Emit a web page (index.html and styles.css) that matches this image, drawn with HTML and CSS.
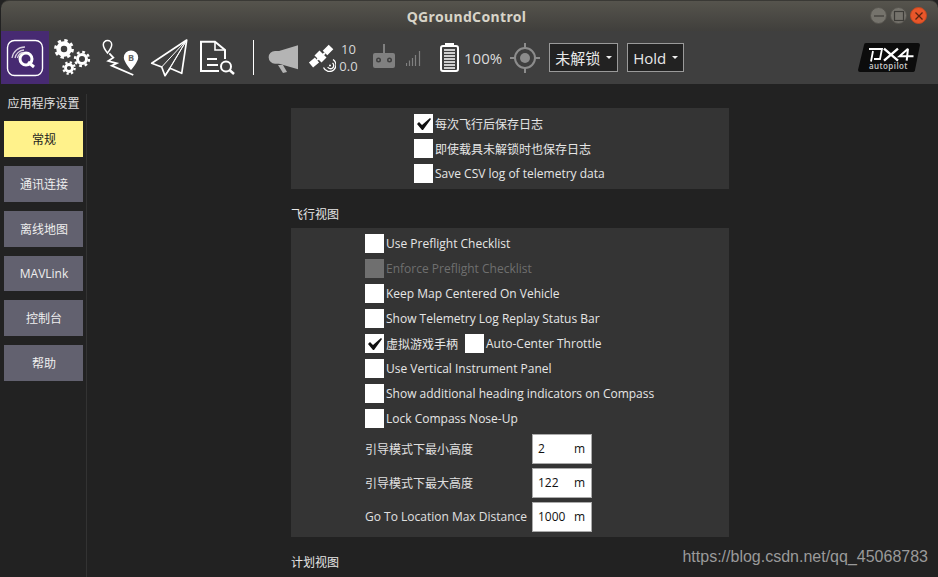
FILE: index.html
```html
<!DOCTYPE html>
<html lang="zh">
<head>
<meta charset="utf-8">
<title>QGroundControl</title>
<link rel="stylesheet" href="styles.css">
</head>
<body>
<div class="window">
  <header class="titlebar">
    <span class="title">QGroundControl</span>
    <div class="winbtns">
      <span class="wb"><svg width="14" height="14" viewBox="0 0 14 14"><path d="M2 7h10" stroke="#3c3b37" stroke-width="1.2"/></svg></span>
      <span class="wb"><svg width="14" height="14" viewBox="0 0 14 14"><rect x="2.5" y="2.5" width="9" height="9" fill="none" stroke="#3c3b37" stroke-width="1.2"/></svg></span>
      <span class="wb close"><svg width="14" height="14" viewBox="0 0 14 14"><path d="M3.5 3.5l7 7M10.5 3.5l-7 7" stroke="#5a2410" stroke-width="1.3"/></svg></span>
    </div>
  </header>
  <nav class="toolbar">
    <div class="logo">
      <svg width="38" height="38" viewBox="0 0 38 38">
        <rect x="1.5" y="1.5" width="35" height="35" rx="7" fill="none" stroke="#fff" stroke-width="1.4"/>
        <circle cx="20" cy="20" r="6" fill="none" stroke="#fff" stroke-width="3"/>
        <path d="M22 23l6 5" stroke="#fff" stroke-width="3"/>
        <path d="M6 19a13 13 0 0 1 13-11M9 19a10 10 0 0 1 9-8M11.500 19a7 7 0 0 1 6-5.500" fill="none" stroke="#d8d0e0" stroke-width="1.300"/>
      </svg>
    </div>
    <svg class="ic gears" width="38" height="38" viewBox="0 0 38 38">
      <g fill="none" stroke="#fff">
        <circle cx="10" cy="10" r="5.500" stroke-width="4.500"/><circle cx="10" cy="10" r="8.500" stroke-width="2.800" stroke-dasharray="3.340 3.340"/>
        <circle cx="28" cy="20" r="4.500" stroke-width="3"/><circle cx="28" cy="20" r="7" stroke-width="2.400" stroke-dasharray="2.750 2.750"/>
        <circle cx="15" cy="29" r="3.500" stroke-width="2.800"/><circle cx="15" cy="29" r="5.700" stroke-width="2.200" stroke-dasharray="2.240 2.240"/>
      </g>
    </svg>
    <svg class="ic route" width="38" height="38" viewBox="0 0 38 38">
      <path d="M5.500 1.500a4.200 4.200 0 0 1 4.200 4.200c0 3-4.200 8.300-4.200 8.300S1.300 8.700 1.300 5.700A4.200 4.200 0 0 1 5.500 1.500z" fill="none" stroke="#fff" stroke-width="1.500"/>
      <path d="M7.300 14.300l4 4.400-5 3.300 8.400 2.300-5 2.400L31.300 36" fill="none" stroke="#fff" stroke-width="1.800"/>
      <path d="M29 11.500a7.200 7.200 0 0 1 7.200 7.200c0 4-7.200 12.300-7.200 12.300s-7.200-8.300-7.200-12.300a7.200 7.200 0 0 1 7.200-7.200z" fill="#fff"/>
      <text x="29" y="21.500" class="pinletter">B</text>
    </svg>
    <svg class="ic plane" width="38" height="38" viewBox="0 0 38 38">
      <path d="M36.700 1L1.700 24.300l10 3.700L15 36.700l5-7.400 11.700 5z" fill="none" stroke="#fff" stroke-width="1.700" stroke-linejoin="round"/>
      <path d="M36.700 1L11.700 28M36.700 1L15 36.700M36.700 1L20 29.300" fill="none" stroke="#fff" stroke-width="1"/>
    </svg>
    <svg class="ic doc" width="38" height="38" viewBox="0 0 38 38">
      <path d="M26 20V11L16 2.700H2V32h18" fill="none" stroke="#fff" stroke-width="2"/>
      <path d="M16 3v8h10" fill="none" stroke="#fff" stroke-width="1.600"/>
      <path d="M8 20h10M8 26h11" stroke="#fff" stroke-width="2"/>
      <circle cx="27" cy="27.500" r="5" fill="none" stroke="#fff" stroke-width="2"/>
      <path d="M30.500 31l4.500 4" stroke="#fff" stroke-width="2.400"/>
    </svg>
    <span class="divider"></span>
    <svg class="ic horn" width="30" height="30" viewBox="0 0 30 30">
      <path d="M7 8h4L30 2.300v24L11 20.700H7A6.350 6.350 0 0 1 7 8z" fill="#b4b4b4"/>
      <path d="M10 22h5l4 7-4 1z" fill="#b4b4b4"/>
    </svg>
    <svg class="ic sat" width="28" height="28" viewBox="0 0 28 28">
      <g fill="none" stroke="#fff">
        <path d="M3 21l6-5M17 9l6-6" stroke-width="6.500"/>
        <path d="M9 16l8-7" stroke-width="2"/>
        <path d="M9 9l7 7" stroke-width="7"/>
        <path d="M25 15.500a6.500 6.500 0 1 1-9.500 8" stroke-width="1.300"/>
        <path d="M24.500 19a3.200 3.200 0 1 1-4.800 4" stroke-width="1.300"/>
      </g>
      <circle cx="22" cy="21.500" r="1" fill="#fff"/>
    </svg>
    <div class="satnum"><span>10</span><span>0.0</span></div>
    <svg class="ic rc" width="22" height="24" viewBox="0 0 22 24">
      <path d="M10 0h2v9h-2z" fill="#808080"/>
      <rect x="0" y="9" width="22" height="15" rx="2" fill="#808080"/>
      <circle cx="5.500" cy="16" r="2.500" fill="#3f3f3f"/><circle cx="16.500" cy="16" r="2.500" fill="#3f3f3f"/>
      <circle cx="5.500" cy="16" r="1" fill="#808080"/><circle cx="16.500" cy="16" r="1" fill="#808080"/>
    </svg>
    <svg class="ic bars" width="15" height="15" viewBox="0 0 15 15">
      <path d="M.5 15v-3M3.500 15V9.500M6.500 15V7M9.500 15V4M13.500 15V0" stroke="#808080" stroke-width="1.200"/>
    </svg>
    <svg class="ic batt" width="19" height="29" viewBox="0 0 19 29">
      <path d="M5 0h9v2H5z" fill="#fff"/>
      <rect x="1" y="3" width="17" height="25" rx="2" fill="none" stroke="#fff" stroke-width="2"/>
      <path d="M4 7h11M4 10h11M4 13h11M4 16h11M4 19h11M4 22h11M4 25h11" stroke="#fff" stroke-width="1.500"/>
    </svg>
    <span class="pct">100%</span>
    <svg class="ic gps" width="30" height="30" viewBox="0 0 30 30">
      <circle cx="15" cy="15" r="10" fill="none" stroke="#8c8c8c" stroke-width="2"/>
      <circle cx="15" cy="15" r="5" fill="#8c8c8c"/>
      <path d="M15 0v5M15 25v5M0 15h5M25 15h5" stroke="#8c8c8c" stroke-width="2"/>
    </svg>
    <div class="combo arm"><span>未解锁</span><i class="caret"></i></div>
    <div class="combo mode"><span>Hold</span><i class="caret"></i></div>
    <svg class="px4" width="62" height="29" viewBox="0 0 62 29">
      <path d="M8 0h52q2 0 2 2l-5 25q0 2-3 2H2q-2 0-2-2L6 2q0-2 2-2z" fill="#0c0c0c"/>
      <path d="M13 18.500L15 8M11 6h13l-2 10h-6" fill="none" stroke="#fff" stroke-width="1.800"/>
      <path d="M26 5.700L40 17.700M40 5.700L26 17.700" stroke="#fff" stroke-width="2.400"/>
      <path d="M50 5.700l-8.500 7.600h14M50 5.700L48.700 17.700" fill="none" stroke="#fff" stroke-width="2"/>
      <text x="11" y="26" class="px4sub">autopilot</text>
    </svg>
  </nav>
  <div class="main">
    <aside class="sidebar">
      <div class="sidehead">应用程序设置</div>
      <div class="sidebtn active">常规</div>
      <div class="sidebtn">通讯连接</div>
      <div class="sidebtn">离线地图</div>
      <div class="sidebtn short">MAVLink</div>
      <div class="sidebtn">控制台</div>
      <div class="sidebtn">帮助</div>
    </aside>
    <section class="content">
      <div class="column">
        <div class="panel logs">
          <label class="row"><span class="cb on"><svg width="19" height="19" viewBox="0 0 19 19"><path d="M3 10l2-2 3 3 8-7 1 1-8 11H8z" fill="#111"/></svg></span><span>每次飞行后保存日志</span></label>
          <label class="row"><span class="cb"></span><span>即使载具未解锁时也保存日志</span></label>
          <label class="row"><span class="cb"></span><span>Save CSV log of telemetry data</span></label>
        </div>
        <h2 class="head">飞行视图</h2>
        <div class="panel fly">
          <label class="row"><span class="cb"></span><span>Use Preflight Checklist</span></label>
          <label class="row dim"><span class="cb off"></span><span>Enforce Preflight Checklist</span></label>
          <label class="row"><span class="cb"></span><span>Keep Map Centered On Vehicle</span></label>
          <label class="row"><span class="cb"></span><span>Show Telemetry Log Replay Status Bar</span></label>
          <label class="row"><span class="cb on"><svg width="19" height="19" viewBox="0 0 19 19"><path d="M3 10l2-2 3 3 8-7 1 1-8 11H8z" fill="#111"/></svg></span><span>虚拟游戏手柄</span><span class="cb second"></span><span>Auto-Center Throttle</span></label>
          <label class="row"><span class="cb"></span><span>Use Vertical Instrument Panel</span></label>
          <label class="row"><span class="cb"></span><span>Show additional heading indicators on Compass</span></label>
          <label class="row"><span class="cb"></span><span>Lock Compass Nose-Up</span></label>
          <div class="field"><span class="flabel">引导模式下最小高度</span><div class="input"><span>2</span><span class="unit">m</span></div></div>
          <div class="field"><span class="flabel">引导模式下最大高度</span><div class="input"><span>122</span><span class="unit">m</span></div></div>
          <div class="field"><span class="flabel en">Go To Location Max Distance</span><div class="input"><span>1000</span><span class="unit">m</span></div></div>
        </div>
        <h2 class="head plan">计划视图</h2>
      </div>
    </section>
  </div>
  <div class="watermark">https://blog.csdn.net/qq_45068783</div>
</div>
</body>
</html>
```

FILE: styles.css
```css
* { box-sizing: border-box; }
html, body { margin: 0; padding: 0; height: 100%; overflow: hidden; background: #222; }
body { font-family: "Open Sans", "Noto Sans CJK SC", sans-serif; font-size: 12px; color: #e6e6e6; }
.window { position: relative; width: 938px; height: 577px; overflow: hidden; background: #222; }

.titlebar { position: relative; height: 31px; margin-left: 1px; display: flex; align-items: center; justify-content: center; background: linear-gradient(#56544d, #403f3c); border-top: 1px solid #3a3935; border-radius: 8px 8px 0 0; }
.title { font-family: "Noto Sans", "Open Sans", sans-serif; font-weight: 700; font-size: 14px; letter-spacing: .35px; color: #d8d4c8; padding-right: 6px; }
.winbtns { position: absolute; right: 11px; top: 6px; display: flex; gap: 3px; }
.wb { width: 17px; height: 17px; border-radius: 50%; display: flex; align-items: center; justify-content: center; background: #75736c; border: 1px solid #55534d; }
.wb.close { background: #e8562a; border-color: #c14820; }

.toolbar { height: 53px; margin-left: 1px; display: flex; align-items: center; background: #3f3f3f; }
.logo { width: 48px; height: 53px; display: flex; align-items: center; justify-content: center; background: #472a72; }
.ic { flex: none; display: block; }
.gears { margin-left: 5px; }
.route { margin-left: 10px; }
.plane { margin-left: 10px; }
.doc { margin-left: 11px; }
.pinletter { font-family: "Open Sans", sans-serif; font-size: 9px; font-weight: 700; text-anchor: middle; fill: #666; }
.divider { width: 1px; height: 35px; margin: 0 14px 0 16px; background: #fff; }
.sat { margin-left: 10px; }
.satnum { width: 21px; margin-left: 2px; display: flex; flex-direction: column; align-items: center; font-size: 13px; line-height: 17px; color: #d8d8d8; }
.rc { margin-left: 14px; margin-top: -4px; }
.bars { margin-left: 11px; margin-top: 1px; }
.batt { margin-left: 19px; }
.pct { margin-left: 5px; font-size: 15px; color: #dcdcdc; }
.gps { margin-left: 8px; }
.combo { height: 29px; display: flex; align-items: center; gap: 6px; padding: 0 5px; background: #222; border: 1px solid #9a9a9a; font-size: 15px; color: #e8e8e8; white-space: nowrap; }
.arm { width: 69px; margin-left: 9px; }
.mode { width: 57px; margin-left: 9px; }
.caret { width: 0; height: 0; border: 3px solid transparent; border-top: 3px solid #eee; border-bottom: 0; }
.px4 { margin-left: auto; margin-right: 18px; }
.px4sub { font-family: "Open Sans", sans-serif; font-size: 8px; font-weight: 600; letter-spacing: .4px; fill: #ccc; }

.main { display: flex; height: 493px; margin-left: 1px; }
.sidebar { width: 86px; margin-top: 10px; padding: 3px 3px 0; border-right: 1px solid #333; display: flex; flex-direction: column; align-items: stretch; }
.sidehead { height: 24px; text-align: center; line-height: 14px; font-size: 12px; color: #e0e0e0; }
.sidebtn { flex: none; height: 36px; margin-bottom: 9px; padding-left: 1px; display: flex; align-items: center; justify-content: center; background: #62616f; color: #eee; font-size: 12px; }
.sidebtn.short { height: 35px; }
.sidebtn.active { background: #fff28b; color: #222; }

.content { flex: 1; padding-top: 24px; }
.column { width: 438px; margin-left: 204px; }
.panel { background: #343434; }
.logs { height: 81px; padding: 6px 0 0 123px; }
.fly { height: 309px; padding: 6px 0 0 74px; }
.row { height: 19px; margin-bottom: 6px; display: flex; align-items: center; color: #e6e6e6; white-space: nowrap; }
.row .cb { margin-right: 2px; }
.cb { flex: none; width: 19px; height: 19px; display: block; background: #fff; }
.cb.second { margin-left: 7px; }
.cb.off { background: #6f6f6f; }
.dim { color: #6f6f6f; }
.head { height: 39px; margin: 0; padding-top: 18px; font-weight: 400; font-size: 12px; line-height: 16px; color: #e6e6e6; }
.plan { height: 40px; }
.field { height: 30px; margin-bottom: 4px; display: flex; align-items: center; white-space: nowrap; }
.flabel { width: 167px; color: #e0e0e0; }
.flabel.en { padding-bottom: 1px; }
.input { width: 60px; height: 30px; padding: 0 6px 1px 5px; display: flex; align-items: center; justify-content: space-between; background: #fff; border: 1px solid #aaa; color: #111; }
.unit { color: #111; }

.watermark { position: absolute; right: 10px; top: 548px; font-family: "Liberation Sans", sans-serif; font-size: 16px; line-height: 18px; color: #9a9a9a; }
```
